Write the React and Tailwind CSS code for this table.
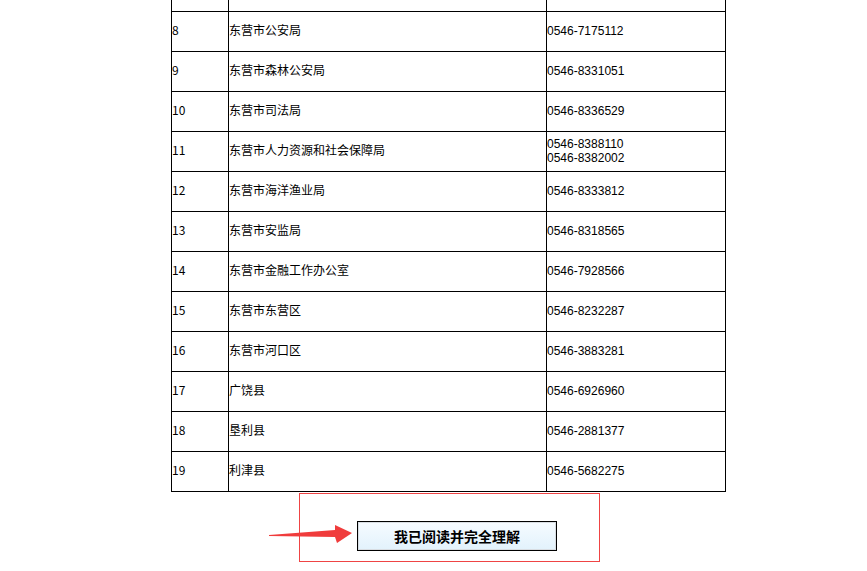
const rows = [
  ["8", "东营市公安局", ["0546-7175112"]],
  ["9", "东营市森林公安局", ["0546-8331051"]],
  ["10", "东营市司法局", ["0546-8336529"]],
  ["11", "东营市人力资源和社会保障局", ["0546-8388110", "0546-8382002"]],
  ["12", "东营市海洋渔业局", ["0546-8333812"]],
  ["13", "东营市安监局", ["0546-8318565"]],
  ["14", "东营市金融工作办公室", ["0546-7928566"]],
  ["15", "东营市东营区", ["0546-8232287"]],
  ["16", "东营市河口区", ["0546-3883281"]],
  ["17", "广饶县", ["0546-6926960"]],
  ["18", "垦利县", ["0546-2881377"]],
  ["19", "利津县", ["0546-5682275"]],
];

function Row({ no, name, phones }) {
  return (
    <div className="flex h-[40px] border-b border-black leading-[14px]">
      <div className="w-[57px] border-r border-black flex items-center pb-[3px]">{no}</div>
      <div className="w-[318px] border-r border-black flex items-center pb-[3px]">{name}</div>
      <div className="flex-1 flex flex-col justify-center pb-[2px] font-['Liberation_Sans',sans-serif]">
        {phones.map((p) => (
          <div key={p} className="h-[14px]">{p}</div>
        ))}
      </div>
    </div>
  );
}

export default function App() {
  return (
    <div className="w-[867px] h-[571px] overflow-hidden bg-white text-black text-[12px] font-['Noto_Sans_CJK_SC',sans-serif]">
      <div className="ml-[171px] w-[555px] -mt-[29px] border-x border-t border-black">
        <div className="flex h-[40px] border-b border-black">
          <div className="w-[57px] border-r border-black" />
          <div className="w-[318px] border-r border-black" />
          <div className="flex-1" />
        </div>
        {rows.map(([no, name, phones]) => (
          <Row key={no} no={no} name={name} phones={phones} />
        ))}
      </div>

      <div className="relative ml-[299px] mt-[1px] w-[301px] h-[69px] border border-[#ef4444] pl-[57px] pt-[27px]">
        <svg className="absolute left-[-35px] top-[26px] w-[90px] h-[30px]" viewBox="0 0 90 30">
          <polygon points="4,15 70,10 70,5 87,13 72,23 70,17 4,16" fill="#f03c3c" />
        </svg>
        <button className="w-[200px] h-[30px] border border-black bg-gradient-to-b from-[#f6fbff] to-[#e2f2fc] shadow-[inset_0_0_0_1px_#d8dde2] text-[14px] font-bold text-black">
          我已阅读并完全理解
        </button>
      </div>
    </div>
  );
}
